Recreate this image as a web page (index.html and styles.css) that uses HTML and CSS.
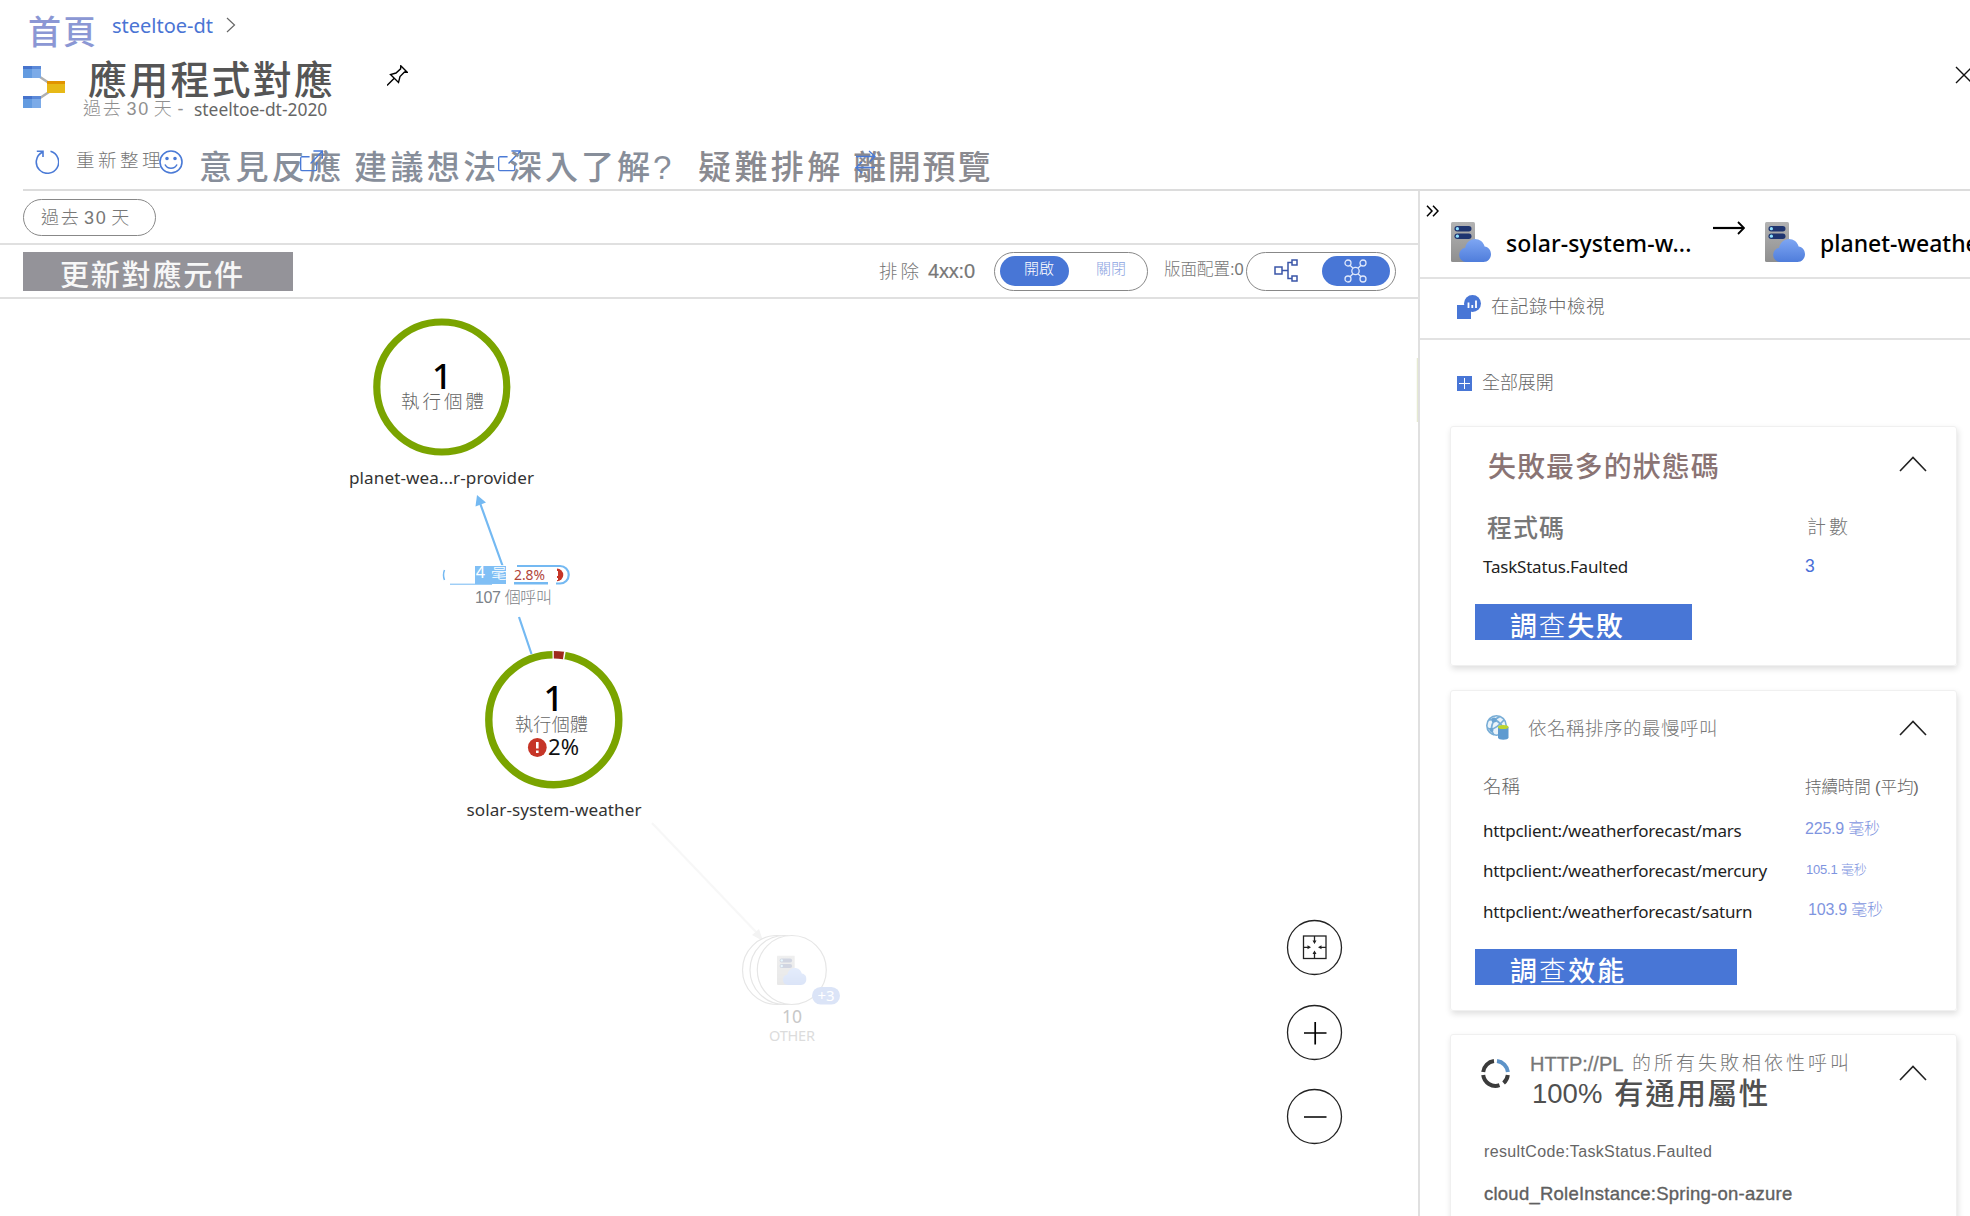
FILE: index.html
```html
<!DOCTYPE html>
<html lang="zh-Hant">
<head>
<meta charset="utf-8">
<title>應用程式對應</title>
<link rel="stylesheet" href="styles.css">
</head>
<body>
<svg class="defs" width="0" height="0">
  <defs>
    <linearGradient id="cloudFill" x1="0" y1="0" x2="0" y2="1"><stop offset="0" stop-color="#7ea6f3"/><stop offset="1" stop-color="#4f7ddb"/></linearGradient>
    <linearGradient id="rackFill" x1="0" y1="0" x2="0" y2="1"><stop offset="0" stop-color="#b3b3b3"/><stop offset="1" stop-color="#8f8f8f"/></linearGradient>
    <symbol id="server" viewBox="0 0 40 40">
      <rect x="0" y="0" width="24" height="40" rx="1.5" fill="url(#rackFill)"/>
      <rect x="3.5" y="4" width="17" height="5.4" rx="2.7" fill="#1f3570"/>
      <rect x="3.5" y="11.5" width="17" height="5.4" rx="2.7" fill="#1f3570"/>
      <circle cx="6.4" cy="6.7" r="1.6" fill="#8fe0ff"/><circle cx="6.4" cy="14.2" r="1.6" fill="#8fe0ff"/>
      <path d="M15 40a7.2 7.2 0 0 1-.8-14.3C15 20.500 19 17 24 17c4.600 0 8.400 3 9.600 7.400C37.300 24.800 40 28 40 32c0 4.500-3.300 8-7.500 8z" fill="url(#cloudFill)"/>
    </symbol>
    <symbol id="chevron" viewBox="0 0 28 16"><path d="M1 15 14 1.500 27 15" fill="none" stroke="#222" stroke-width="1.600"/></symbol>
    <symbol id="external" viewBox="0 0 24 24"><path d="M17.500 12.500V20a1.500 1.500 0 0 1-1.500 1.500H2A1.500 1.500 0 0 1 .7 20V8.500A1.500 1.500 0 0 1 2 7h8M11 14 23 1.500M14 1h9.300v8" fill="none" stroke="#4a7ad6" stroke-width="1.400"/></symbol>
  </defs>
</svg>

<header>
  <nav class="crumbs">
    <a class="home">首頁</a>
    <a class="crumb">steeltoe-dt</a>
    <svg class="sep" width="10" height="16" viewBox="0 0 10 16" fill="none" stroke="#666" stroke-width="1.200"><path d="M1 1l7.500 7L1 15"/></svg>
  </nav>
  <div class="titlebar">
    <svg class="logo" width="42" height="42" viewBox="0 0 42 42">
      <path d="M17 11l9 6M17 32l9-6" stroke="#b0b0b0" stroke-width="2.500"/>
      <rect width="18" height="12" fill="#7cabe8"/><rect width="9" height="12" fill="#639be0"/><rect width="18" height="3" fill="#4673cc"/><rect x="9" width="9" height="3" fill="#5b89d8"/>
      <rect y="30" width="18" height="12" fill="#7cabe8"/><rect y="30" width="9" height="12" fill="#639be0"/><rect y="30" width="18" height="3" fill="#4673cc"/><rect x="9" y="30" width="9" height="3" fill="#5b89d8"/>
      <rect x="24" y="15" width="18" height="12" fill="#e7b917"/><rect x="24" y="15" width="18" height="3" fill="#e19300"/>
    </svg>
    <div class="titles">
      <h1>應用程式對應</h1>
      <div class="subtitle"><span class="range">過去 30 天 -</span><span class="resource">steeltoe-dt-2020</span></div>
    </div>
    <svg class="pin" width="21" height="21" viewBox="0 0 21 21" fill="none" stroke="#000" stroke-width="1.400"><path d="M0 20.500 7.500 13M3.500 9.500 11.500 17.500 13 11.500 17.500 7 20.200 7.200 13.800.8 13.600 3.800 9 8z"/></svg>
    <svg class="close" width="18" height="18" viewBox="0 0 18 18" stroke="#111" stroke-width="1.400"><path d="M1 1l16 16M17 1 1 17"/></svg>
  </div>
  <div class="toolbar">
    <svg class="refresh" width="24" height="24" viewBox="0 0 24 24" fill="none" stroke="#4a7ad6" stroke-width="1.600"><path d="M7.200 2.200A11.200 11.200 0 1 0 15.500 1.300M1.800 1.200H8V7"/></svg>
    <span class="small-cmd">重新整理</span>
    <svg class="smile" width="24" height="24" viewBox="0 0 24 24" fill="none" stroke="#4a7ad6" stroke-width="1.600"><circle cx="12" cy="12" r="11"/><path d="M6 14.500c2.500 5 9.500 5 12 0"/><circle cx="8" cy="8.500" r="1" fill="#4a7ad6"/><circle cx="16" cy="8.500" r="1" fill="#4a7ad6"/></svg>
    <span class="cmd cmd-feedback">意見反應<svg class="over over-a" width="25" height="23"><use href="#external"/></svg></span>
    <span class="cmd">建議想法<svg class="over over-b" width="25" height="23"><use href="#external"/></svg></span>
    <span class="cmd cmd-learn">深入了解?</span>
    <span class="cmd cmd-gray">疑難排解</span>
    <span class="cmd cmd-gray cmd-leave">離開預覽<svg class="over over-c" width="21" height="24" viewBox="0 0 21 24" fill="none" stroke="#4a7ad6" stroke-width="1.300"><path d="M1 6.500h19M14 1l6 5.500-5 5M20 17.500H1M7 12l-6 5.500 6 5.500"/></svg></span>
  </div>
</header>

<main>
  <section class="map">
    <div class="filters"><span class="pill">過去 30 天</span></div>
    <div class="controls">
      <button class="update">更新對應元件</button>
      <span class="exclude">排除</span><span class="code">4xx:0</span>
      <div class="toggle"><span class="on">開啟</span><span class="off">關閉</span></div>
      <span class="layout-label">版面配置:0</span>
      <div class="toggle layout">
        <svg width="24" height="23" viewBox="0 0 24 23" fill="none" stroke="#3a55a8" stroke-width="1.500"><rect x="1" y="8" width="7" height="7"/><path d="M8 11.500h6M18 3.500h-4v16h4"/><rect x="18" y="1" width="5" height="5"/><rect x="18" y="17" width="5" height="5"/></svg>
        <span class="active"><svg width="23" height="24" viewBox="0 0 23 24" fill="none" stroke="#dfe8fb" stroke-width="1.300"><circle cx="11.500" cy="12" r="3.700"/><circle cx="4" cy="4" r="3"/><circle cx="19" cy="4" r="3"/><circle cx="4" cy="20" r="3"/><circle cx="19" cy="20" r="3"/><path d="M6 6.200l3 3M17 6.200l-3 3M6 17.800l3-3M17 17.800l-3-3"/></svg></span>
      </div>
    </div>
    <svg class="canvas" width="1418" height="917" viewBox="0 299 1418 917">
      <g class="edges">
        <path d="M480 503 503 567M519 617l12.500 37" stroke="#74b9f2" stroke-width="2.200"/>
        <path d="M477 495l-1.500 11.500 10.500-4z" fill="#74b9f2"/>
        <path d="M652 823 757 933" stroke="#f7f7f7" stroke-width="2"/>
        <path d="M763 941l-11-6 7-6z" fill="#f3f3f3"/>
        <path d="M1417.500 358v64" stroke="#e6ead2" stroke-width="1.500"/>
      </g>
      <g class="node">
        <circle cx="441.800" cy="387" r="65" fill="#fff" stroke="#7aa400" stroke-width="7.200"/>
        <text class="count" x="442" y="389" text-anchor="middle">1</text>
        <text class="cjk" x="401" y="407.500" font-size="18.500" textLength="83">執行個體</text>
        <text class="name" x="349" y="483.500" textLength="185">planet-wea...r-provider</text>
      </g>
      <g class="edge-label">
        <path d="M444.500 580q-2-5 0-10" fill="none" stroke="#74b9f2" stroke-width="1.500"/>
        <path d="M450 584.200h42" stroke="#74b9f2" stroke-width="1"/>
        <rect x="475" y="566" width="31" height="18" fill="#80bff5"/>
        <text class="cjk white" x="451" y="577.500" font-size="17" textLength="74">88.4 毫秒</text>
        <path d="M517 566h39" stroke="#74b9f2" stroke-width="2.200"/>
        <path d="M514 583.300h34" stroke="#74b9f2" stroke-width="2.600"/>
        <path d="M556 566h4a8.700 8.700 0 0 1 0 17.500h-4" fill="none" stroke="#74b9f2" stroke-width="2.200"/>
        <path d="M557 568.600a6.300 6.300 0 0 1 0 12.600z" fill="#c63527"/>
        <path d="M557 571v5M557 578v2" stroke="#fff" stroke-width="2"/>
        <text class="rate" x="514" y="580" textLength="31" lengthAdjust="spacingAndGlyphs">2.8%</text>
        <text class="cjk calls" x="475" y="602.500" font-size="16" textLength="77">107 個呼叫</text>
      </g>
      <g class="node">
        <circle cx="553.800" cy="719.700" r="65" fill="#fff" stroke="#7aa400" stroke-width="7.400"/>
        <path d="M552.500 654.800A65 65 0 0 1 565 655.700" fill="none" stroke="#fff" stroke-width="8.400"/>
        <path d="M553.800 654.800A65 65 0 0 1 563.500 655.500" fill="none" stroke="#9e2a1c" stroke-width="7.600"/>
        <text class="count" x="553.500" y="711" text-anchor="middle">1</text>
        <text class="cjk" x="515" y="730.500" font-size="18" textLength="73">執行個體</text>
        <circle cx="537.300" cy="747.500" r="9.400" fill="#c63527"/>
        <path d="M537.300 742v6.500M537.300 750.500v2.500" stroke="#fff" stroke-width="2.600"/>
        <text class="percent" x="548" y="755" textLength="31" lengthAdjust="spacingAndGlyphs">2%</text>
        <text class="name" x="466.500" y="815.500" textLength="175">solar-system-weather</text>
      </g>
      <g class="other">
        <g fill="#fff" stroke="#e6e6e6" stroke-width="1.200"><circle cx="777" cy="970" r="34.500"/><circle cx="784.500" cy="970" r="34.500"/><circle cx="791.800" cy="970" r="34.500"/></g>
        <use href="#server" x="777" y="955.500" width="29.500" height="29.500" opacity=".2"/>
        <rect x="812" y="987" width="28" height="17.500" rx="8.700" fill="#dbe4f7"/>
        <text x="826" y="1001" text-anchor="middle" font-size="15" fill="#fff">+3</text>
        <text x="792" y="1023" text-anchor="middle" font-size="17.500" fill="#c8c8c8">10</text>
        <text x="769" y="1041" font-size="14.500" fill="#dcdcdc" textLength="46">OTHER</text>
      </g>
      <g class="zoom" fill="none" stroke="#222" stroke-width="1.300">
        <circle cx="1314.500" cy="947.500" r="27"/><circle cx="1314.500" cy="1032.500" r="27"/><circle cx="1314.500" cy="1116.500" r="27"/>
        <rect x="1303.500" y="936" width="22.500" height="22.500"/>
        <path d="M1314.500 936v6M1314.500 958.500v-6M1303.500 947.300h6M1326 947.300h-6"/>
        <path d="M1312.500 940.500h4l-2 3.500zM1312.500 954h4l-2-3.500zM1307.500 945.300v4l3.500-2zM1321.500 945.300v4l-3.500-2z" fill="#222" stroke="none"/>
        <path d="M1304 1033h22.500M1315.200 1022v22.500M1304 1117h22.500" stroke="#000" stroke-width="1.700"/>
      </g>
    </svg>
  </section>

  <aside>
    <div class="route">
      <svg class="collapse" width="13" height="12" viewBox="0 0 13 12" fill="none" stroke="#000" stroke-width="1.500"><path d="M1 .7 6 6l-5 5.300M7 .7 12 6l-5 5.300"/></svg>
      <svg class="srv" width="40" height="40"><use href="#server"/></svg>
      <span class="from">solar-system-w...</span>
      <svg class="arrow" width="32" height="14" viewBox="0 0 32 14" fill="none" stroke="#000" stroke-width="2.200"><path d="M0 7h30"/><path d="M25 1l6 6-6 6" stroke-width="1.800"/></svg>
      <svg class="srv" width="40" height="40"><use href="#server"/></svg>
      <span class="to">planet-weathe</span>
    </div>
    <div class="logs">
      <svg width="24" height="24" viewBox="0 0 24 24"><rect y="10" width="14" height="14" fill="#4876d6"/><circle cx="15.500" cy="8.500" r="8.500" fill="#4876d6"/><path d="M11.500 13V7.500M15.300 13v-3M19 13V5.500" stroke="#fff" stroke-width="1.800"/></svg>
      <span>在記錄中檢視</span>
    </div>
    <div class="expand">
      <svg width="15" height="15" viewBox="0 0 15 15"><rect width="15" height="15" fill="#4876d6"/><path d="M2 7.500h11M7.500 2v11" stroke="#fff"/></svg>
      <span>全部展開</span>
    </div>

    <article class="card failures">
      <div class="head"><h2>失敗最多的狀態碼</h2><svg class="chev" width="28" height="16"><use href="#chevron"/></svg></div>
      <div class="row cols"><span class="c1">程式碼</span><span class="c2">計數</span></div>
      <div class="row data"><span class="c1">TaskStatus.Faulted</span><span class="c2">3</span></div>
      <button>調<span class="thin">查</span>失敗</button>
    </article>

    <article class="card slow">
      <div class="head">
        <svg class="globe" width="23" height="25" viewBox="0 0 23 25"><circle cx="10.500" cy="10.500" r="9.700" fill="#eaf3fa" stroke="#78add6" stroke-width="1.600"/><path d="M3 5c6-2 11 2 15 9M8 20C3 14 6 5 14 1.500M1.500 13C6 16 11 13 18 5" fill="none" stroke="#78add6" stroke-width="1.800"/><circle cx="8" cy="5" r="2.500" fill="#6aa3d2"/><circle cx="5.500" cy="15" r="2" fill="#6aa3d2"/><path d="M12 12v10.500c0 3 10.500 3 10.500 0V12z" fill="#5f9bd0"/><ellipse cx="17.200" cy="12" rx="5.300" ry="2" fill="#bdd531"/></svg>
        <h2>依名稱排序的最慢呼叫</h2><svg class="chev" width="28" height="16"><use href="#chevron"/></svg>
      </div>
      <div class="row cols"><span class="c1">名稱</span><span class="c2">持續時間 (平均)</span></div>
      <div class="row data"><span class="c1">httpclient:/weatherforecast/mars</span><span class="c2">225.9 毫秒</span></div>
      <div class="row data"><span class="c1">httpclient:/weatherforecast/mercury</span><span class="c2 tiny">105.1 毫秒</span></div>
      <div class="row data"><span class="c1">httpclient:/weatherforecast/saturn</span><span class="c2 shifted">103.9 毫秒</span></div>
      <button>調<span class="thin">查</span>效能</button>
    </article>

    <article class="card common">
      <div class="head">
        <svg class="ring" width="29" height="29" viewBox="0 0 29 29" fill="none" stroke="#3b3b3b" stroke-width="4"><path d="M16 2.100A12.400 12.400 0 0 1 26.900 13" stroke="#5d93c8"/><path d="M26.800 16a12.400 12.400 0 0 1-4.200 8M18.500 26.200A12.400 12.400 0 0 1 2.200 16M2.200 13A12.400 12.400 0 0 1 13 2.100"/></svg>
        <div class="heading"><div class="dep"><span class="url">HTTP://PL</span><span class="rest">的所有失敗相依性呼叫</span></div><div class="share"><span class="num">100%</span><span class="attr">有通用屬性</span></div></div>
        <svg class="chev" width="28" height="16"><use href="#chevron"/></svg>
      </div>
      <p class="result">resultCode:TaskStatus.Faulted</p>
      <p class="role">cloud_RoleInstance:Spring-on-azure</p>
    </article>
  </aside>
</main>
</body>
</html>
```
FILE: styles.css
```css
* { box-sizing: border-box; }
body {
  margin: 0; width: 1970px; height: 1216px; overflow: hidden; background: #fff;
  font-family: "Liberation Sans", "Noto Sans CJK TC", sans-serif; color: #777;
  display: flex; flex-direction: column; white-space: nowrap;
}
h1, h2, p { margin: 0; font-weight: 400; }
svg { flex: none; display: block; }
button { border: 0; font-family: inherit; text-align: left; white-space: nowrap; }
.defs { position: absolute; }

/* header */
header { flex: none; height: 191px; display: flex; flex-direction: column; }
.crumbs { height: 50px; display: flex; align-items: flex-start; padding-left: 28px; }
.home { width: 84px; margin-top: 13px; font-size: 33px; line-height: 40px; letter-spacing: 2px; color: #8b97d4; font-weight: 500; }
.crumb { width: 114px; margin-top: 11px; font: 20px/30px "Noto Sans", sans-serif; color: #4a74d4; }
.sep { margin-top: 17px; }
.titlebar { height: 90px; display: flex; align-items: flex-start; padding-left: 23px; }
.logo { margin-top: 16px; }
.titles { width: 304px; margin: 11px 0 0 18px; }
h1 { padding-left: 5px; font-size: 39px; line-height: 39px; letter-spacing: 2.200px; color: #555; font-weight: 500; }
.subtitle { display: flex; line-height: 18px; }
.range { width: 111px; font-size: 18px; letter-spacing: 1.800px; word-spacing: -3px; color: #8f8f8f; font-weight: 300; }
.resource { font: 17.400px/18px "Noto Sans", sans-serif; color: #666; }
.pin { margin-top: 15px; }
.close { margin: 16px -3px 0 auto; }
.toolbar { height: 51px; margin-left: 23px; padding-left: 12px; border-bottom: 2px solid #dcdcdc; display: flex; align-items: flex-start; }
.refresh, .smile { margin-top: 10px; }
.small-cmd { width: 82px; margin: 6px 1px 0 17px; font-size: 18.500px; line-height: 30px; letter-spacing: 3.500px; font-weight: 300; }
.cmd { position: relative; width: 155px; margin-top: 8px; font-size: 33px; line-height: 40px; letter-spacing: 3.400px; color: #878e9a; font-weight: 500; }
.cmd-feedback { margin-left: 16px; }
.cmd-learn { width: 189px; letter-spacing: 3px; }
.cmd-gray { color: #8a8a90; }
.cmd-leave { letter-spacing: 1.800px; }
.over { position: absolute; top: 2px; }
.over-a { left: 100px; }
.over-b { left: 143px; }
.over-c { left: 2px; }

/* map */
main { flex: 1; min-height: 0; display: flex; }
.map { flex: none; width: 1418px; display: flex; flex-direction: column; }
.filters { height: 54px; padding: 8px 0 0 23px; border-bottom: 2px solid #e0e0e0; }
.pill { display: block; width: 133px; height: 37px; padding-left: 17px; border: 1px solid #888; border-radius: 19px; font-size: 18px; line-height: 37px; letter-spacing: 1.700px; word-spacing: -3px; font-weight: 300; }
.controls { height: 54px; padding: 7px 0 0 23px; border-bottom: 2px solid #e0e0e0; display: flex; align-items: flex-start; }
.update { width: 270px; height: 39px; padding: 2px 0 0 37px; background: #949399; color: #f7f7f7; font-size: 29px; line-height: 45px; letter-spacing: 1.800px; font-weight: 500; }
.exclude { width: 49px; margin-left: 586px; font-size: 18.500px; line-height: 39px; letter-spacing: 3px; font-weight: 300; }
.code { width: 66px; font-size: 20px; line-height: 39px; letter-spacing: -.2px; -webkit-text-stroke: .2px #777; }
.toggle { width: 154px; height: 39px; border: 1px solid #888; border-radius: 20px; display: flex; padding: 3px 5px; font-size: 15px; line-height: 25px; }
.on { width: 69px; height: 30px; border-radius: 15px; padding-left: 24px; background: #4876d6; color: #fff; font-weight: 300; }
.off { padding-left: 27px; color: #8ea6e2; font-weight: 300; }
.layout-label { width: 82px; margin-left: 16px; font-size: 16.500px; line-height: 34px; font-weight: 300; }
.layout { width: 150px; padding: 3px 5px 3px 27px; justify-content: space-between; }
.layout > svg { margin-top: 3px; }
.active { width: 68px; height: 30px; border-radius: 15px; background: #4876d6; display: flex; align-items: center; justify-content: center; padding-right: 1px; }
.canvas { font-family: "Noto Sans", sans-serif; }
.cjk { font-family: "Liberation Sans", "Noto Sans CJK TC", sans-serif; font-weight: 300; fill: #666; }
.white { fill: #fff; }
.calls { fill: #7c8288; }
.count { font-size: 35px; font-weight: 500; fill: #000; }
.name { font-size: 17.100px; fill: #333; }
.rate { font-size: 15px; fill: #b0453a; }
.percent { font-size: 21.500px; fill: #111; }

/* details */
aside { flex: 1; min-width: 0; overflow: hidden; border-left: 2px solid #e0e0e0; }
.route { height: 88px; border-bottom: 2px solid #e2e2e2; display: flex; align-items: flex-start; padding-left: 6px; color: #000; font: 500 23px/34px "Noto Sans", sans-serif; }
.route span { flex: none; }
.collapse { margin-top: 14px; }
.srv { margin-top: 31px; }
.collapse + .srv { margin-left: 12px; }
.from { width: 207px; margin: 35px 0 0 15px; letter-spacing: .1px; }
.arrow { margin: 30px 20px 0 0; }
.to { margin: 35px 0 0 15px; }
.logs { height: 61px; border-bottom: 2px solid #e2e2e2; display: flex; padding: 16px 0 0 37px; font-size: 18.500px; line-height: 24px; letter-spacing: .5px; font-weight: 300; }
.logs span { margin-left: 10px; }
.expand { height: 86px; display: flex; padding: 36px 0 0 37px; font-size: 18px; line-height: 14px; letter-spacing: -.1px; font-weight: 300; }
.expand span { margin-left: 10px; }
.logs, .expand { color: #666; }
.card { width: 507px; margin: 0 0 24px 30px; border: 1px solid #f0f0f0; border-radius: 3px; box-shadow: 1px 3px 6px rgba(0, 0, 0, .13); display: flex; flex-direction: column; padding-left: 24px; }
.head { display: flex; align-items: flex-start; }
.chev { margin: 0 29px 0 auto; }
.row { display: flex; padding-left: 8px; }
.c1 { width: 322px; flex: none; }
.data .c1 { font: 17px/30px "Noto Sans", sans-serif; letter-spacing: -.18px; color: #222; }
.data .c2 { font-size: 16px; line-height: 30px; color: #7f95e0; letter-spacing: -.2px; font-weight: 300; }
.card button { height: 36px; background: #4876d6; color: #fff; font-size: 27px; line-height: 47px; letter-spacing: 1.600px; padding: 0 0 0 35px; font-weight: 500; }
.thin { font-weight: 300; }

.failures { height: 240px; }
.failures .head { padding-top: 29px; height: 86px; }
.failures h2 { padding-left: 13px; font-size: 28px; line-height: 24px; letter-spacing: .95px; color: #8a7474; font-weight: 500; }
.failures .cols { height: 38px; line-height: 30px; }
.failures .cols .c1 { width: 324px; padding-left: 4px; font-size: 25px; letter-spacing: 1px; font-weight: 500; }
.failures .cols .c2 { font-size: 19px; letter-spacing: 3px; font-weight: 300; }
.failures .data { height: 53px; }
.failures .data .c1 { letter-spacing: -.2px; line-height: 31px; }
.failures .data .c2 { font-size: 17.500px; line-height: 30px; color: #4a6ed8; }
.failures button { width: 217px; }

.slow { height: 321px; margin-bottom: 23px; }
.slow .head { padding-top: 24px; height: 81px; }
.globe { margin-left: 11px; }
.slow h2 { margin-left: 19px; font-size: 18.500px; line-height: 27px; letter-spacing: .5px; font-weight: 300; }
.slow .chev { margin-top: 5px; }
.slow .cols { height: 43.500px; line-height: 30px; color: #666; font-weight: 300; }
.slow .cols .c1 { font-size: 18.500px; }
.slow .cols .c2 { font-size: 16.500px; letter-spacing: -.1px; }
.slow .data { height: 40.500px; }
.slow .data .c2 { margin-top: -2px; }
.slow .data .tiny { font-size: 13px; padding-left: 1px; margin-top: -1px; }
.slow .data .shifted { padding-left: 3px; }
.slow button { width: 262px; margin-top: 12px; letter-spacing: 2.100px; }

.common { height: 300px; }
.common .head { height: 107px; padding-top: 18px; }
.ring { margin: 6px 0 0 6px; }
.heading { margin-left: 20px; }
.dep { display: flex; line-height: 22px; }
.url { width: 102px; font-size: 20px; -webkit-text-stroke: .3px #777; }
.rest { font-size: 19px; letter-spacing: 3px; font-weight: 300; }
.share { display: flex; line-height: 37px; color: #505050; }
.num { width: 84px; padding-left: 2px; font-size: 27.500px; }
.attr { font-size: 29.500px; letter-spacing: 1.700px; font-weight: 500; }
.common .chev { margin-top: 12px; }
.result { padding-left: 9px; height: 39px; font-size: 16px; line-height: 20px; letter-spacing: .36px; color: #666; }
.role { padding-left: 9px; font-size: 18.500px; line-height: 26px; letter-spacing: .24px; color: #606060; -webkit-text-stroke: .35px #606060; }
```
